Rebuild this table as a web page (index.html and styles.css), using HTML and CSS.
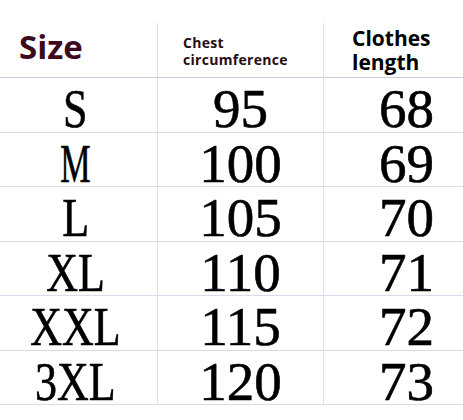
FILE: index.html
```html
<!DOCTYPE html>
<html>
<head>
<meta charset="utf-8">
<link rel="stylesheet" href="styles.css">
</head>
<body>
<div class="table">
  <div class="cell head head-size">Size</div>
  <div class="cell head head-chest">Chest<br>circumference</div>
  <div class="cell head head-length">Clothes<br>length</div>

  <div class="cell val size"><span class="letters">S</span></div>
  <div class="cell val">95</div>
  <div class="cell val">68</div>

  <div class="cell val size"><span class="letters narrow">M</span></div>
  <div class="cell val">100</div>
  <div class="cell val">69</div>

  <div class="cell val size"><span class="letters">L</span></div>
  <div class="cell val">105</div>
  <div class="cell val">70</div>

  <div class="cell val size"><span class="letters">XL</span></div>
  <div class="cell val">110</div>
  <div class="cell val">71</div>

  <div class="cell val size"><span class="letters">XXL</span></div>
  <div class="cell val">115</div>
  <div class="cell val">72</div>

  <div class="cell val size"><span class="letters">3XL</span></div>
  <div class="cell val">120</div>
  <div class="cell val">73</div>
</div>
</body>
</html>
```

FILE: styles.css
```css
html, body {
  margin: 0;
  padding: 0;
  background: #ffffff;
  overflow: hidden;
}

body {
  width: 463px;
  height: 420px;
  padding-top: 23px;
  box-sizing: border-box;
}

.table {
  display: grid;
  grid-template-columns: 158px 166px 139px;
  grid-template-rows: 55px repeat(6, 54.5px);
  width: 463px;
}

.cell {
  box-sizing: border-box;
  border-bottom: 1px solid #d8dbea;
}

.cell:nth-child(3n+1),
.cell:nth-child(3n+2) {
  border-right: 1px solid #dcdfec;
}

.head {
  font-family: "Open Sans", "Liberation Sans", sans-serif;
  font-weight: 700;
  border-bottom-color: #c9cce0;
}

.head-size {
  font-size: 33px;
  line-height: 33px;
  color: #3d0a1e;
  padding: 7px 0 0 19px;
}

.head-chest {
  font-size: 14px;
  line-height: 17px;
  letter-spacing: 0.3px;
  color: #2a0b12;
  padding: 11px 0 0 25px;
}

.head-length {
  font-size: 21px;
  line-height: 24px;
  color: #000000;
  padding: 3px 0 0 28px;
}

.val {
  font-family: "Liberation Serif", "Times New Roman", serif;
  font-size: 55px;
  line-height: 44px;
  padding-top: 9px;
  color: #000000;
  text-align: center;
  -webkit-text-stroke: 0.6px #000000;
}

.val:nth-child(3n) {
  text-align: left;
  padding-left: 55px;
}

.size {
  padding-right: 6px;
}

.letters {
  display: inline-block;
  transform: scaleX(0.8);
}

.letters.narrow {
  transform: scaleX(0.62);
}
```
